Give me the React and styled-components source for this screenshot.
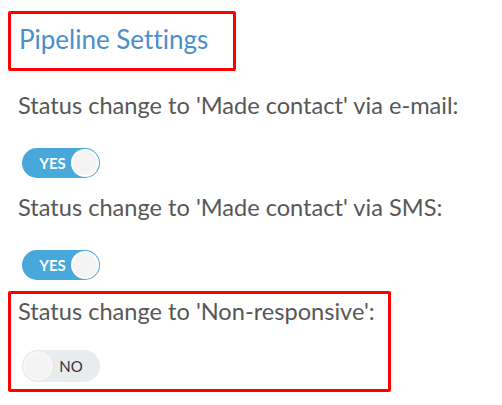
import React from "react";
import styled, { createGlobalStyle } from "styled-components";

const GlobalStyle = createGlobalStyle`
  body {
    margin: 0;
    background: #ffffff;
    font-family: Lato, "Open Sans", sans-serif;
  }
`;

const settings = [
  { label: "Status change to 'Made contact' via e-mail:", on: true },
  { label: "Status change to 'Made contact' via SMS:", on: true },
  { label: "Status change to 'Non-responsive':", on: false, marked: true },
];

function Toggle({ on }) {
  return (
    <Switch $on={on}>
      {on ? (
        <>
          <SwitchText $on>YES</SwitchText>
          <Knob $on />
        </>
      ) : (
        <>
          <Knob />
          <SwitchText>NO</SwitchText>
        </>
      )}
    </Switch>
  );
}

export default function App() {
  return (
    <>
      <GlobalStyle />
      <Page>
        <TitleBox>
          <Title>Pipeline Settings</Title>
        </TitleBox>
        <List>
          {settings.map((s) => (
            <Row key={s.label} $marked={s.marked}>
              <Label>{s.label}</Label>
              <Toggle on={s.on} />
            </Row>
          ))}
        </List>
      </Page>
    </>
  );
}

const Page = styled.div`
  padding: 11px 0 0 8px;
`;

const TitleBox = styled.div`
  box-sizing: border-box;
  width: 228px;
  height: 60px;
  border: 3px solid #ff0000;
  border-radius: 2px;
  padding: 10px 0 0 8px;
`;

const Title = styled.h1`
  margin: 0;
  font-family: Lato, sans-serif;
  font-weight: 400;
  font-size: 26px;
  line-height: 30px;
  font-variant-ligatures: none;
  color: #4a8fcc;
`;

const List = styled.div`
  display: flex;
  flex-direction: column;
  align-items: flex-start;
  gap: 15px;
  padding-top: 20px;
`;

const Row = styled.div`
  box-sizing: border-box;
  display: flex;
  flex-direction: column;
  align-items: flex-start;
  gap: ${(p) => (p.$marked ? "25px" : "29px")};
  padding-left: 10px;

  ${(p) =>
    p.$marked &&
    `
    width: 383px;
    margin-top: -4px;
    border: 3px solid #ff0000;
    border-radius: 2px;
    padding: 3px 0 7px 7px;
  `}
`;

const Label = styled.div`
  font-family: Lato, sans-serif;
  font-size: 23.6px;
  line-height: 28px;
  color: #575757;
`;

const Switch = styled.div`
  box-sizing: border-box;
  display: flex;
  align-items: center;
  width: 78px;
  height: ${(p) => (p.$on ? "30px" : "32px")};
  margin-left: 4px;
  padding: 1px;
  border-radius: 16px;
  background: ${(p) => (p.$on ? "#48a7db" : "#e9ecef")};
`;

const SwitchText = styled.span`
  flex: 1;
  text-align: center;
  font-family: Lato, sans-serif;
  font-size: 15px;
  font-weight: ${(p) => (p.$on ? 700 : 400)};
  color: ${(p) => (p.$on ? "#ffffff" : "#333333")};
  padding-left: ${(p) => (p.$on ? "11px" : "0")};
  padding-right: ${(p) => (p.$on ? "0" : "10px")};
`;

const Knob = styled.span`
  box-sizing: border-box;
  width: ${(p) => (p.$on ? "28px" : "30px")};
  height: ${(p) => (p.$on ? "28px" : "30px")};
  border-radius: 50%;
  background: #f4f4f4;
  border: 2px solid ${(p) => (p.$on ? "#ffffff" : "#f7f7f7")};
  box-shadow: ${(p) => (p.$on ? "none" : "0 0 0 1px #e4e6e8")};
`;
